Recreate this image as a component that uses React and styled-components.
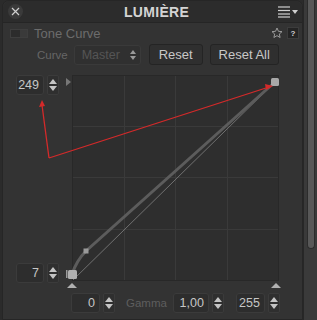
import React from 'react';
import styled, { createGlobalStyle } from 'styled-components';

const Global = createGlobalStyle`
  html, body {
    margin: 0;
    padding: 0;
    background: #2b2b2b;
  }
  body {
    font-family: "Liberation Sans", Arial, sans-serif;
  }
`;

const Page = styled.div`
  width: 317px;
  height: 320px;
  display: flex;
  overflow: hidden;
`;

const Panel = styled.div`
  width: 300px;
  margin-left: 2px;
  height: 318px;
  background: #333333;
  border: 1px solid #262626;
  border-radius: 7px 7px 0 0;
  display: flex;
  flex-direction: column;
`;

const TitleBar = styled.div`
  height: 21px;
  background: #2c2c2c;
  border-radius: 7px 7px 0 0;
  border-bottom: 1px solid #252525;
  display: flex;
  align-items: center;
  justify-content: space-between;
  padding: 0 4px 0 5px;
`;

const CloseButton = styled.div`
  width: 15px;
  height: 15px;
  border-radius: 50%;
  background: #3a3a3a;
  display: flex;
  align-items: center;
  justify-content: center;
`;

const Title = styled.div`
  font-size: 14px;
  font-weight: bold;
  color: #d4d4d4;
  letter-spacing: 0.3px;
  margin-left: 12px;
`;

const SectionHeader = styled.div`
  height: 20px;
  display: flex;
  align-items: center;
  padding: 0 3px 0 7px;
`;

const Toggle = styled.div`
  width: 16px;
  height: 7px;
  border: 1px solid #3e3e3e;
  background: linear-gradient(to right, #2c2c2c 55%, #3a3a3a 55%);
  margin-right: 6px;
`;

const SectionTitle = styled.div`
  font-size: 13px;
  color: #6c6c6c;
  flex: 1;
`;

const HelpBox = styled.div`
  width: 10px;
  height: 10px;
  margin-left: 4px;
  background: #242424;
  border: 1px solid #3c3c3c;
  color: #d0d0d0;
  font-size: 8px;
  font-weight: bold;
  display: flex;
  align-items: center;
  justify-content: center;
`;

const ControlsRow = styled.div`
  height: 21px;
  display: flex;
  align-items: center;
  padding-left: 34px;
  margin-top: 1px;
`;

const Label = styled.span`
  font-size: 11.5px;
  color: ${p => p.$dim ? '#5e5e5e' : '#666666'};
  margin: 0 ${p => p.$right || 0}px 0 ${p => p.$left || 0}px;
`;

const Select = styled.div`
  width: 67px;
  height: 20px;
  box-sizing: border-box;
  border: 1px solid #3a3a3a;
  border-radius: 3px;
  background: #303030;
  color: #555555;
  font-size: 12.5px;
  display: flex;
  align-items: center;
  justify-content: space-between;
  padding: 0 4px 0 7px;
  margin-right: 8px;
`;

const Button = styled.div`
  width: ${p => p.$w}px;
  height: 21px;
  box-sizing: border-box;
  border: 1px solid #242424;
  border-radius: 3px;
  background: #2f2f2f;
  color: #c8c8c8;
  font-size: 13px;
  display: flex;
  align-items: center;
  justify-content: center;
  margin-right: ${p => p.$gap || 0}px;
`;

const CurveArea = styled.div`
  position: relative;
  margin-top: 4px;
  display: flex;
  height: 220px;
`;

const LeftColumn = styled.div`
  width: 46px;
  padding: 6px 0 6px 13px;
  display: flex;
  flex-direction: column;
  justify-content: space-between;
`;

const InputGroup = styled.div`
  display: flex;
  align-items: center;
  gap: 3px;
  margin-left: ${p => p.$left || 0}px;
`;

const NumberBox = styled.div`
  width: ${p => p.$w}px;
  height: 20px;
  box-sizing: border-box;
  border: 1px solid #3b3b3b;
  border-radius: 3px;
  background: #2d2d2d;
  color: #c6c6c6;
  font-size: 12.5px;
  display: flex;
  align-items: center;
  justify-content: flex-end;
  padding-right: 4px;
`;

const Spinner = styled.div`
  width: 12px;
  height: 20px;
  box-sizing: border-box;
  border: 1px solid #3b3b3b;
  border-radius: 2px;
  background: #2f2f2f;
  display: flex;
  flex-direction: column;
  align-items: center;
  justify-content: center;
  gap: 2px;
`;

const Arrow = styled.div`
  width: 0;
  height: 0;
  border-left: 4px solid transparent;
  border-right: 4px solid transparent;
  ${p => p.$down ? 'border-top: 5px solid #c4c4c4;' : 'border-bottom: 5px solid #c4c4c4;'}
`;

const Overlay = styled.svg`
  position: absolute;
  left: 0;
  top: 0;
  pointer-events: none;
`;

const BottomRow = styled.div`
  display: flex;
  align-items: center;
  padding-left: 68px;
  margin-top: 4px;
`;

const Scrollbar = styled.div`
  width: 13px;
  height: 320px;
  background: #3a3a3a;
  border-left: 1px solid #272727;
  display: flex;
  justify-content: center;
`;

const Thumb = styled.div`
  width: 6px;
  height: 248px;
  background: #585858;
  border: 1px solid #2c2c2c;
  border-top: none;
  border-radius: 0 0 4px 4px;
`;

const Stepper = () => (
  <Spinner>
    <Arrow />
    <Arrow $down />
  </Spinner>
);

const NumberInput = ({ value, w = 29, left }) => (
  <InputGroup $left={left}>
    <NumberBox $w={w}>{value}</NumberBox>
    <Stepper />
  </InputGroup>
);

const Graph = () => (
  <svg width="228" height="220" viewBox="0 0 228 220">
    <rect x="10.5" y="6.5" width="206" height="205" fill="#2e2e2e" stroke="#282828" />
    {[62, 113, 165].map(x => (
      <line key={'v' + x} x1={x + 0.5} y1="7" x2={x + 0.5} y2="211" stroke="#3a3a3a" />
    ))}
    {[57, 108, 160].map(y => (
      <line key={'h' + y} x1="11" y1={y + 0.5} x2="216" y2={y + 0.5} stroke="#3a3a3a" />
    ))}
    <line x1="11" y1="211" x2="213" y2="13" stroke="#707070" strokeWidth="1" />
    <path d="M10 205 Q15 191 24 182 L213 13" fill="none" stroke="#5c5c5c" strokeWidth="3" />
    <rect x="21.5" y="179.5" width="5" height="5" fill="#9a9a9a" />
    <rect x="209" y="9" width="8" height="8" rx="1.5" fill="#a8a8a8" />
    <rect x="6" y="201" width="9" height="9" rx="1.5" fill="#b0b0b0" />
    <rect x="4" y="201" width="1.5" height="8" fill="#9a9a9a" />
    <polygon points="4,9 9,13 4,17" fill="#777" />
    <polygon points="5,219 15,219 10,214" fill="#b0b0b0" />
    <polygon points="209,219 219,219 214,214" fill="#b0b0b0" />
  </svg>
);

const Star = () => (
  <svg width="12" height="12" viewBox="0 0 24 24">
    <polygon
      points="12,2 14.9,8.6 22,9.3 16.6,14 18.2,21 12,17.3 5.8,21 7.4,14 2,9.3 9.1,8.6"
      fill="none"
      stroke="#9a9a9a"
      strokeWidth="2"
    />
  </svg>
);

const MenuIcon = () => (
  <svg width="20" height="12" viewBox="0 0 20 12">
    {[1, 4.5, 8, 11].map(y => (
      <line key={y} x1="0" y1={y} x2="12" y2={y} stroke="#d0d0d0" strokeWidth="1.2" />
    ))}
    <polygon points="14,4 20,4 17,8" fill="#d0d0d0" />
  </svg>
);

export default function App() {
  return (
    <>
      <Global />
      <Page>
        <Panel>
          <TitleBar>
            <CloseButton>
              <svg width="9" height="9" viewBox="0 0 9 9">
                <path d="M1 1 L8 8 M8 1 L1 8" stroke="#cfcfcf" strokeWidth="1.2" />
              </svg>
            </CloseButton>
            <Title>LUMIÈRE</Title>
            <MenuIcon />
          </TitleBar>

          <SectionHeader>
            <Toggle />
            <SectionTitle>Tone Curve</SectionTitle>
            <Star />
            <HelpBox>?</HelpBox>
          </SectionHeader>

          <ControlsRow>
            <Label $right={6}>Curve</Label>
            <Select>
              Master
              <svg width="6" height="10" viewBox="0 0 6 10">
                <polygon points="0,4 6,4 3,0" fill="#9a9a9a" />
                <polygon points="0,6 6,6 3,10" fill="#9a9a9a" />
              </svg>
            </Select>
            <Button $w={54} $gap={7}>Reset</Button>
            <Button $w={69}>Reset All</Button>
          </ControlsRow>

          <CurveArea>
            <LeftColumn>
              <NumberInput value="249" w={28} />
              <NumberInput value="7" w={28} />
            </LeftColumn>
            <Graph />
            <Overlay width="300" height="220" viewBox="0 0 300 220">
              <path d="M46 89 L39 36 M46 89 L266 18" stroke="#d42a2a" strokeWidth="1.3" fill="none" />
              <polygon points="39,31 36,38 42,37" fill="#d42a2a" />
              <polygon points="270,17 262,15 263,21" fill="#d42a2a" />
            </Overlay>
          </CurveArea>

          <BottomRow>
            <NumberInput value="0" />
            <Label $dim $left={11} $right={6}>Gamma</Label>
            <NumberInput value="1,00" w={36} />
            <NumberInput value="255" w={29} left={12} />
          </BottomRow>
        </Panel>
        <Scrollbar>
          <Thumb />
        </Scrollbar>
      </Page>
    </>
  );
}
